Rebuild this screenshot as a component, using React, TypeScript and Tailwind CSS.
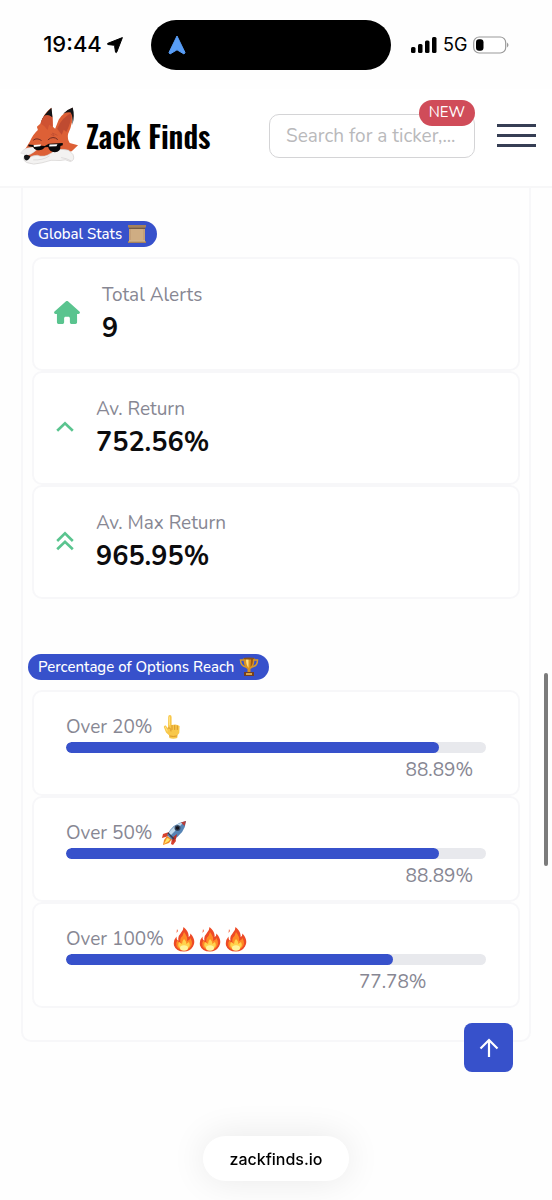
import type { ReactNode } from "react";
import { FaHouse } from "react-icons/fa6";

const sans = "font-['Nunito','Noto_Sans',sans-serif]";

function StatusBar() {
  return (
    <div className="grid h-[89px] grid-cols-[151fr_240px_161fr] items-center font-['Inter',sans-serif] text-black">
      <div className="flex items-center justify-center gap-1 pl-4">
        <time className="text-[22px] font-medium">19:44</time>
        <svg viewBox="0 0 18 18" className="size-[18px]" aria-hidden="true">
          <path d="M16.4 1.6 10.8 16q-.6 1.3-1.3.1L8.6 10.2Q8.4 9.3 7.600 9.200L1.900 8.500Q.7 8 1.900 7.300Z" fill="#000" stroke="#000" strokeLinejoin="round" />
        </svg>
      </div>
      <div className="flex h-[50px] items-center rounded-full bg-black px-4">
        <svg viewBox="0 0 20 20" className="size-5" aria-hidden="true">
          <path d="M10 1 18 17.500 17 19 10 14.800 3 19 2 17.500Z" fill="#589df6" stroke="#589df6" strokeLinejoin="round" />
        </svg>
      </div>
      <div className="flex items-center gap-[6px] pl-5">
        <svg viewBox="0 0 26 18" className="h-[18px] w-[26px]" aria-hidden="true">
          <rect x="0" y="11" width="4.500" height="6" rx="1.500" />
          <rect x="7" y="8" width="4.500" height="9" rx="1.500" />
          <rect x="14" y="4.500" width="4.500" height="12.500" rx="1.500" />
          <rect x="21" y="1" width="4.500" height="16" rx="1.500" />
        </svg>
        <span className="text-lg">5G</span>
        <svg viewBox="0 0 36 18" className="h-[18px] w-9" aria-hidden="true">
          <rect x=".7" y="1" width="32" height="16" rx="5.500" fill="#fff" stroke="#999" strokeWidth="1.200" />
          <rect x="3" y="3.200" width="7.500" height="11.600" rx="3" />
          <path d="M34 6.500q3 2.500 0 5Z" fill="#999" />
        </svg>
      </div>
    </div>
  );
}

function FoxLogo() {
  return (
    <svg viewBox="10 20 190 180" className="h-[60px] w-[63px] shrink-0" aria-hidden="true">
      <path d="M110 25 Q85 45 78 72 L67 82 L70 92 Q55 105 45 128 L30 152 L42 176 L90 170 L150 160 L172 156 L191 138 L166 131 Q158 118 161 104 Q178 70 175 25 Q150 36 133 60 L122 88 L115 82 L114 54 Z" fill="#dd6036" />
      <path d="M172 40 Q170 70 156 98 L148 91 L142 106 L128 88 Q142 54 172 40Z" fill="#bf4b31" />
      <path d="M78 72 Q87 45 111 25 L114 54 Q101 44 91 49Z" fill="#141416" />
      <path d="M146 43 Q160 29 175 24 Q182 49 174 77 Q176 50 169 39 Q159 37 146 43Z" fill="#141416" />
      <path d="M78 72 Q84 53 91 49 Q101 45 114 54 L115 83 L104 76 L99 92 L89 80Z" fill="#cf5232" />
      <path d="M34 147 Q22 153 18 162 L30 165 L29 173 Q52 165 65 153 L55 143Z" fill="#f0eeee" stroke="#cfcaca" />
      <path d="M27 174 Q25 185 36 190 Q56 199 82 191 Q110 179 137 184 Q153 178 168 187 Q183 183 176 166 L163 153 Q126 145 111 161 Q89 177 68 168 Q49 168 40 180Z" fill="#f3f2f1" stroke="#d2cecd" strokeWidth="2" />
      <path d="M105 170 Q84 184 56 182 M140 175 Q156 177 170 185" fill="none" stroke="#c8c4c4" strokeWidth="1.500" />
      <path d="M28 170 Q36 162 47 171 Q43 184 34 184 Q27 179 28 170Z" fill="#151517" />
      <path d="M42 136 L91 140 L103 133 L145 131 L145 138 L138 140 Q139 158 121 159 Q104 158 101 143 L91 144 Q83 155 66 152 Q57 149 56 143 L41 141Z" fill="#08080a" />
      <path d="M57 137 L80 136 L77 141 L58 143Z M105 136 L129 135 L126 141 L104 142Z" fill="#fff" />
      <path d="M57 122 Q66 114 80 123 M101 121 Q116 108 129 120" fill="none" stroke="#702b22" strokeWidth="3" strokeLinecap="round" />
      <path d="M109 105 L119 110 L114 101 L129 108" fill="none" stroke="#bb4b30" strokeWidth="2" />
    </svg>
  );
}

function Header() {
  return (
    <header className="flex h-[99px] items-center border-b-2 border-[#f7f7f8] bg-white pr-4 pb-1 pl-[18px]">
      <a href="#home" className="mr-auto flex items-center gap-[5px]">
        <FoxLogo />
        <span className="font-['Oswald','Liberation_Sans_Narrow','Liberation_Sans',sans-serif] text-3xl font-semibold whitespace-nowrap text-black">Zack Finds</span>
      </a>
      <div className="relative">
        <input
          aria-label="Search for a ticker"
          placeholder="Search for a ticker,..."
          className="block h-11 w-[206px] rounded-[10px] border border-[#d4d4d6] bg-white px-4 text-[19px] text-[#555] placeholder:text-[#b9b9bb]"
        />
        <span className="absolute -top-[14px] right-0 flex h-[26px] items-center rounded-full bg-[#d04c59] px-[10px] text-[15px] text-white">NEW</span>
      </div>
      <button aria-label="Open menu" className="ml-[22px] flex w-[39px] flex-col gap-[7px]">
        <span className="h-[3px] w-full bg-[#363e54]" />
        <span className="h-[3px] w-full bg-[#363e54]" />
        <span className="h-[3px] w-full bg-[#363e54]" />
      </button>
    </header>
  );
}

function Scroll() {
  return (
    <svg viewBox="0 0 20 20" className="size-5" role="img" aria-label="Scroll">
      <path d="M2 2h16v16H2z" fill="#c4a078" />
      <path d="M4 4h12v12H4z" fill="#cfad83" />
      <path d="M1 1h18v2.500H1zM1 17h18v2H1z" fill="#a5825c" />
      <path d="M2 3.500h16v1.500H2z" fill="#755b43" />
      <path d="M2 17h16" stroke="#dfc39a" />
    </svg>
  );
}

function Trophy() {
  return (
    <svg viewBox="0 0 20 20" className="size-5" role="img" aria-label="Trophy">
      <path d="M5 3H1.500q0 6 5.500 7M15 3h3.500q0 6-5.500 7" fill="none" stroke="#d89b28" strokeWidth="1.500" />
      <path d="M4.500 1h11q0 9-4 11v3h-3v-3q-4-2-4-11Z" fill="#d99320" />
      <path d="M7 2h2.500v9Q7 8 7 2Z" fill="#ffe080" />
      <path d="M12 2h2q0 6-2.500 8Z" fill="#9b5710" />
      <path d="M5 15h10v4H5z" fill="#744022" />
      <path d="M7 16h6v2H7z" fill="#d7a54a" />
      <ellipse cx="10" cy="1.500" rx="5.500" ry="1" fill="#8b5418" />
    </svg>
  );
}

function Finger() {
  return (
    <svg viewBox="0 0 24 24" className="size-6" role="img" aria-label="Pointing up">
      <path d="M7.200 2q0-2 1.700-2t1.700 2v8q5-1.500 8 1l-.3 7-2 2.500v2.500q-4 1.500-8 0v-2.500L5 17.500 2.800 12q0-2 2-1.500L7 13.500Z" fill="#f8c84b" />
      <path d="M11 10.500v4m2.700-4v4m2.600-3.500v3.500M7 13q3-1 3 3M8.500 21q4 1 7.500 0" fill="none" stroke="#d79228" strokeWidth=".9" strokeLinecap="round" />
      <path d="M8.500 2v8M4.300 12l2 4" stroke="#ffe17f" strokeWidth="1" strokeLinecap="round" />
    </svg>
  );
}

function Rocket() {
  return (
    <svg viewBox="0 0 26 26" className="size-[26px]" role="img" aria-label="Rocket">
      <path d="M8 12 2 14l-1 4 7-2M14 18l1 3-3 4-2-1 1-6" fill="#d9422d" />
      <path d="m6 16-3 4-1 5 6-2 3-4Z" fill="#f18b24" />
      <path d="m6 18-3 6 5-3 1-2Z" fill="#ffe668" />
      <path d="M6 15Q12 3 25 1q-1 13-14 19Z" fill="#5684b5" />
      <path d="M7 14Q13 4 23 2q-5 5-14 14Z" fill="#bfd9eb" />
      <path d="m11 18 5-4-1 5-3 3Z" fill="#bd3026" />
      <path d="M20 2.500 25 1l-1.500 5Z" fill="#b83c38" />
      <circle cx="16.500" cy="8" r="3" fill="#354963" />
      <circle cx="16.500" cy="8" r="1.800" fill="#17141c" />
      <path d="m7 13 6 6" stroke="#333f56" strokeWidth="1.500" />
    </svg>
  );
}

function Flame() {
  return (
    <svg viewBox="0 0 24 26" className="h-[26px] w-6" role="img" aria-label="Fire">
      <path d="M11.500 1q6 5 5 10 2-1 2-3.500 6 7 2.500 13-3 5-9 5-8 0-10-6-1-5 2.500-9 0 4 2 4-1-4 2-7 3-3 3-6.500Z" fill="#ed4a26" />
      <path d="M12 6q4 5 3 9 3-1 3.500-3 3 6 0 9-2 3-6.500 3-6 0-7.500-4-1-3 1-6 1 3 3 3-1-5 2-7Z" fill="#ff8a25" />
      <path d="M12 13q3 3 2 5l3-2q2 4-1 6-4 3-8 0-3-2-1-6l3 2q0-3 2-5Z" fill="#ffd34d" />
      <ellipse cx="12" cy="22" rx="4" ry="2.800" fill="#fff49c" />
      <path d="M4.500 7 5 3l1 2Z" fill="#f2603a" />
    </svg>
  );
}

function SectionTitle({ children }: { children: ReactNode }) {
  return <h2 className="flex h-[26px] w-fit items-center gap-[5px] rounded-full bg-[#3751cb] px-[10px] text-[15px] font-medium text-white">{children}</h2>;
}

function StatCard({ icon, label, value, wide = false }: { icon: ReactNode; label: string; value: string; wide?: boolean }) {
  return (
    <li className={`flex h-[114px] items-center gap-[22px] rounded-[10px] border-2 border-[#f7f7f9] bg-white pb-[3px] text-[#5ac48f] ${wide ? "pl-5" : "pl-[22px]"}`}>
      {icon}
      <div className="flex flex-col">
        <span className="text-[19px] leading-8 text-[#878793]">{label}</span>
        <strong className="text-[27px] leading-9 font-bold text-[#0c0c0e]">{value}</strong>
      </div>
    </li>
  );
}

function ProgressCard({ label, emoji, value }: { label: string; emoji: ReactNode; value: number }) {
  return (
    <li className="h-[106px] rounded-[10px] border-2 border-[#f7f7f9] bg-white px-8 pt-[22px] text-[19px] text-[#878793]">
      <div className="flex h-7 items-center gap-2 pb-[2px]">
        <span>{label}</span>
        <span className="flex gap-[2px]">{emoji}</span>
      </div>
      <div role="progressbar" aria-label={label} aria-valuenow={value} className="h-[11px] overflow-hidden rounded-full bg-[#e8e9ed]">
        <div className="h-full rounded-full bg-[#3751cb]" style={{ width: `${value}%` }} />
      </div>
      <div className="flex justify-end" style={{ width: `${value}%` }}>
        <div className="flex w-0 justify-center leading-[34px]">
          <span>{value}%</span>
        </div>
      </div>
    </li>
  );
}

export default function App() {
  return (
    <div className={`relative min-h-screen bg-[#fefefe] ${sans}`}>
      <StatusBar />
      <Header />
      <main className="mx-[21px] rounded-b-[10px] border-2 border-t-0 border-[#f7f7f9] px-[5px] pt-[33px] pb-8">
        <section>
          <SectionTitle>Global Stats <Scroll /></SectionTitle>
          <ul className="mx-1 mt-[10px]">
            <StatCard wide label="Total Alerts" value="9" icon={<FaHouse className="h-[23px] w-[26px]" aria-hidden="true" />} />
            <StatCard
              label="Av. Return"
              value="752.56%"
              icon={<svg viewBox="0 0 18 20" className="h-5 w-[18px]" aria-hidden="true"><path d="m1.200 13.800 7.800-7.600 7.800 7.600" fill="none" stroke="currentColor" strokeWidth="2.600" /></svg>}
            />
            <StatCard
              label="Av. Max Return"
              value="965.95%"
              icon={<svg viewBox="0 0 18 20" className="h-5 w-[18px]" aria-hidden="true"><path d="M1.200 10 9 2.400l7.800 7.600M1.200 18.300 9 10.700l7.800 7.600" fill="none" stroke="currentColor" strokeWidth="2.600" /></svg>}
            />
          </ul>
        </section>
        <section className="mt-[55px]">
          <SectionTitle>Percentage of Options Reach <Trophy /></SectionTitle>
          <ul className="mx-1 mt-[10px]">
            <ProgressCard label="Over 20%" emoji={<Finger />} value={88.89} />
            <ProgressCard label="Over 50%" emoji={<Rocket />} value={88.89} />
            <ProgressCard label="Over 100%" emoji={<><Flame /><Flame /><Flame /></>} value={77.78} />
          </ul>
        </section>
      </main>
      <button aria-label="Back to top" className="fixed right-[39px] bottom-32 flex size-[49px] items-center justify-center rounded-[8px] bg-[#3751cb]">
        <svg viewBox="0 0 20 20" className="size-5" fill="none" stroke="#fff" strokeWidth="2.200" aria-hidden="true">
          <path d="M10 19V2M1.500 10.500 10 2l8.500 8.500" />
        </svg>
      </button>
      <div className="fixed inset-x-0 bottom-[19px] flex justify-center">
        <a href="#address" className="flex h-[45px] items-center rounded-full bg-white px-[26px] font-['Inter',sans-serif] text-base font-medium text-black shadow-[0_0_36px_rgba(0,0,0,0.09)]">zackfinds.io</a>
      </div>
      <div className="fixed right-1 bottom-[334px] h-[193px] w-1 rounded-full bg-[#7b7b7b]" />
    </div>
  );
}
